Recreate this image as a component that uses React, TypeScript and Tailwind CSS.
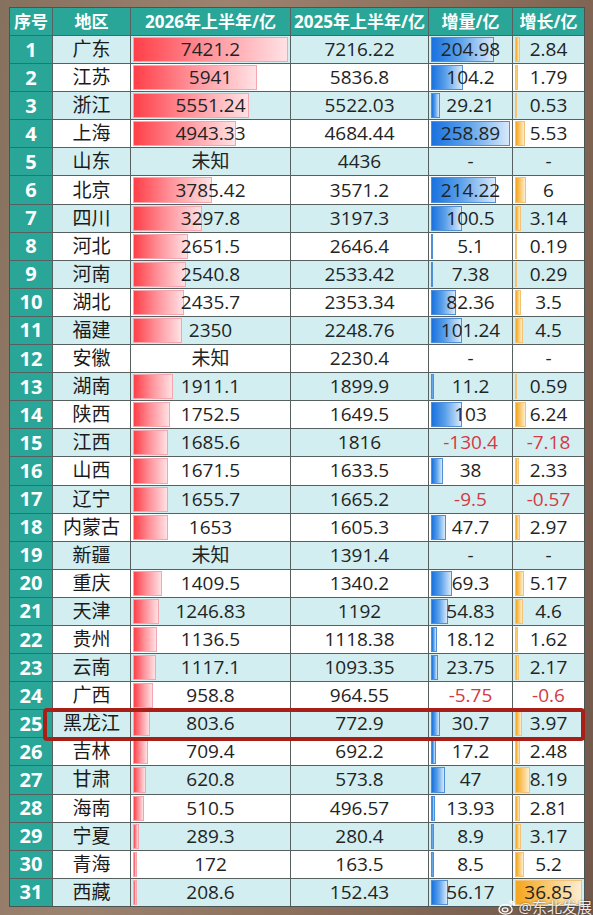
import React, { FC } from "react";

type Row = [number, string, string, string, string, string];

const rows: Row[] = [
  [1, "广东", "7421.2", "7216.22", "204.98", "2.84"],
  [2, "江苏", "5941", "5836.8", "104.2", "1.79"],
  [3, "浙江", "5551.24", "5522.03", "29.21", "0.53"],
  [4, "上海", "4943.33", "4684.44", "258.89", "5.53"],
  [5, "山东", "未知", "4436", "-", "-"],
  [6, "北京", "3785.42", "3571.2", "214.22", "6"],
  [7, "四川", "3297.8", "3197.3", "100.5", "3.14"],
  [8, "河北", "2651.5", "2646.4", "5.1", "0.19"],
  [9, "河南", "2540.8", "2533.42", "7.38", "0.29"],
  [10, "湖北", "2435.7", "2353.34", "82.36", "3.5"],
  [11, "福建", "2350", "2248.76", "101.24", "4.5"],
  [12, "安徽", "未知", "2230.4", "-", "-"],
  [13, "湖南", "1911.1", "1899.9", "11.2", "0.59"],
  [14, "陕西", "1752.5", "1649.5", "103", "6.24"],
  [15, "江西", "1685.6", "1816", "-130.4", "-7.18"],
  [16, "山西", "1671.5", "1633.5", "38", "2.33"],
  [17, "辽宁", "1655.7", "1665.2", "-9.5", "-0.57"],
  [18, "内蒙古", "1653", "1605.3", "47.7", "2.97"],
  [19, "新疆", "未知", "1391.4", "-", "-"],
  [20, "重庆", "1409.5", "1340.2", "69.3", "5.17"],
  [21, "天津", "1246.83", "1192", "54.83", "4.6"],
  [22, "贵州", "1136.5", "1118.38", "18.12", "1.62"],
  [23, "云南", "1117.1", "1093.35", "23.75", "2.17"],
  [24, "广西", "958.8", "964.55", "-5.75", "-0.6"],
  [25, "黑龙江", "803.6", "772.9", "30.7", "3.97"],
  [26, "吉林", "709.4", "692.2", "17.2", "2.48"],
  [27, "甘肃", "620.8", "573.8", "47", "8.19"],
  [28, "海南", "510.5", "496.57", "13.93", "2.81"],
  [29, "宁夏", "289.3", "280.4", "8.9", "3.17"],
  [30, "青海", "172", "163.5", "8.5", "5.2"],
  [31, "西藏", "208.6", "152.43", "56.17", "36.85"],
];

const font = { fontFamily: '"Open Sans", "Noto Sans CJK SC", sans-serif' };

// percent of the column a data bar takes, 0 for blanks and negatives
const pct = (v: string, max: number) => {
  const n = parseFloat(v);
  if (isNaN(n) || n <= 0) return 0;
  return (n / max) * 100;
};

const isNeg = (v: string) => v.startsWith("-") && v.length > 1;

const BarCell: FC<{
  value: string;
  max: number;
  bar: string;
  className: string;
}> = ({ value, max, bar, className }) => {
  const p = pct(value, max);
  return (
    <div className={`relative flex items-center justify-center ${className}`}>
      {p > 0 && (
        <div className="absolute inset-y-[1px] left-[2px] right-[2px]">
          <div className={`h-full ${bar}`} style={{ width: `${p}%` }} />
        </div>
      )}
      <span className={`relative text-[19px] leading-none ${isNeg(value) ? "text-[#d23a44]" : "text-[#1f2424]"}`}>
        {value}
      </span>
    </div>
  );
};

const App: FC = () => {
  return (
    <div
      className="relative w-[593px] h-[915px] overflow-hidden pl-[9px] pt-[7px] bg-[linear-gradient(100deg,#86705e_0%,#9c8370_30%,#8c705c_60%,#72584a_100%)]"
      style={font}
    >
      <div className="w-[576px] h-[900px] flex flex-col border border-[#4a5452] bg-white">
        <div className="h-[27px] flex bg-[#29a698] text-white font-bold text-[17px] leading-none">
          <div className="w-[43px] border-r border-[#56615f] flex items-center justify-center">序号</div>
          <div className="w-[78px] border-r border-[#56615f] flex items-center justify-center">地区</div>
          <div className="w-[160px] border-r border-[#56615f] flex items-center justify-center">2026年上半年/亿</div>
          <div className="w-[138px] border-r border-[#56615f] flex items-center justify-center">2025年上半年/亿</div>
          <div className="w-[84px] border-r border-[#56615f] flex items-center justify-center">增量/亿</div>
          <div className="flex-1 flex items-center justify-center">增长/亿</div>
        </div>
        <div className="flex-1 flex flex-col">
          {rows.map(([no, area, y26, y25, inc, grow]) => {
            const bg = no % 2 === 1 ? "bg-[#d2eef0]" : "bg-white";
            return (
              <div key={no} className="flex-1 flex border-t border-[#56615f]">
                <div className="w-[43px] bg-[#29a698] border-r border-[#56615f] flex items-center justify-center text-white font-bold text-[20px] leading-none">
                  {no}
                </div>
                <div className={`w-[78px] ${bg} border-r border-[#56615f] flex items-center justify-center text-[19px] leading-none text-[#1a1a1a]`}>
                  {area}
                </div>
                <BarCell
                  value={y26}
                  max={7421.2}
                  className={`w-[160px] ${bg} border-r border-[#56615f]`}
                  bar="bg-[linear-gradient(90deg,#ff3f48_0%,#ff8e96_45%,#ffe1e4_100%)] border border-[#f3a6ad]"
                />
                <div className={`w-[138px] ${bg} border-r border-[#56615f] flex items-center justify-center text-[19px] leading-none text-[#1f2424]`}>
                  {y25}
                </div>
                <BarCell
                  value={inc}
                  max={258.89}
                  className={`w-[84px] ${bg} border-r border-[#56615f]`}
                  bar="bg-[linear-gradient(90deg,#1a72de_0%,#5aa0ea_45%,#d8e9fa_100%)] border border-[#4e8fd8]"
                />
                <BarCell
                  value={grow}
                  max={36.85}
                  className={`flex-1 ${bg}`}
                  bar="bg-[linear-gradient(90deg,#f6a51e_0%,#f9c667_45%,#fdedd0_100%)] border border-[#f3c276]"
                />
              </div>
            );
          })}
        </div>
      </div>

      {/* highlight box for 黑龙江 */}
      <div className="absolute left-[43px] top-[708px] w-[542px] h-[33px] border-[4px] border-[#a81f18] rounded-[4px]" />

      {/* watermark */}
      <div className="absolute right-[1px] bottom-0 flex items-center gap-[4px] text-white/90 text-[15px] leading-none [text-shadow:0_0_2px_rgba(0,0,0,0.7)]">
        <svg width="17" height="15" viewBox="0 0 18 16" fill="none" stroke="white" strokeWidth="1.4">
          <ellipse cx="8" cy="10" rx="7" ry="5" />
          <ellipse cx="7.5" cy="10.5" rx="3" ry="2.2" />
          <path d="M12 2.5a3.5 3.5 0 0 1 4 3.5" />
          <path d="M12.5 0.8a5.5 5.5 0 0 1 5 5" />
        </svg>
        <span>@东北发展</span>
      </div>
    </div>
  );
};

export default App;
